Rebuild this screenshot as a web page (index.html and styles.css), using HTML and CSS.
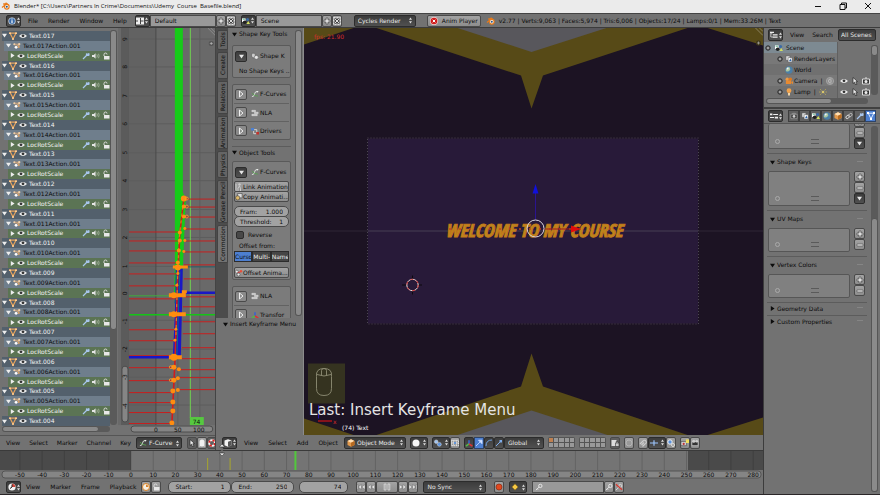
FILE: index.html
```html
<!DOCTYPE html>
<html lang="en">
<head>
    <meta charset="UTF-8">
    <meta name="viewport" content="width=device-width, initial-scale=1.0">
    <title>Blender</title>
    <link rel="stylesheet" href="styles.css">
</head>
<body>
    <!-- icon sprite -->
    <svg class="sprite" aria-hidden="true">
        <symbol id="i-blender" viewBox="0 0 12 10"><path d="M1 7 6.5 2.5H2.5M5.5 1 10 4.5" fill="none" stroke="#e77b1c" stroke-width="1.6"/><circle cx="7" cy="6" r="3.6" fill="#e77b1c"/><circle cx="7" cy="6" r="2.2" fill="#fff"/><circle cx="7" cy="6" r="1.3" fill="#265787"/></symbol>
        <symbol id="i-updown" viewBox="0 0 4 8"><path d="M0 3 2 0 4 3zM0 5 2 8 4 5z" fill="#ddd"/></symbol>
        <symbol id="i-down" viewBox="0 0 6 6"><path d="M0 1h6L3 5.5z" fill="currentColor"/></symbol>
        <symbol id="i-right" viewBox="0 0 6 6"><path d="M1 0v6l4.500-3z" fill="currentColor"/></symbol>
        <symbol id="i-play" viewBox="0 0 8 8"><path d="M2.500 1v6L6 4z" fill="none" stroke="#eee" stroke-width="1"/></symbol>
        <symbol id="i-mesh" viewBox="0 0 8 8"><path d="M1 1.200h6L4 7z" fill="none" stroke="#e8a45c" stroke-width="1.200"/><path d="M0 .5h2V2H0zM6 .5h2V2H6zM3.200 6h1.600v2H3.200z" fill="#ffcb8f"/></symbol>
        <symbol id="i-eye" viewBox="0 0 8 8"><path d="M0 4q4-4 8 0-4 4-8 0z" fill="#eee"/><circle cx="4" cy="3.800" r="1.400" fill="#333"/></symbol>
        <symbol id="i-action" viewBox="0 0 9 8"><path d="M1 2h6M2 5l2-2 3 1" stroke="#d9a774" fill="none"/><circle cx="1.500" cy="2" r="1.200" fill="#f0cfa8"/><circle cx="7" cy="2" r="1.300" fill="#f0cfa8"/><circle cx="3.500" cy="5.500" r="1.600" fill="#fff"/><circle cx="6.500" cy="5" r="1.100" fill="#e6a45f"/></symbol>
        <symbol id="i-wrench" viewBox="0 0 8 8"><path d="M1 7 5 3M4.500 1.500l1.200 1 1.200 0-.2-1.500M4.500 1.500l0 2 2 0 1-1" fill="none" stroke="#a9c6ee" stroke-width="1.200"/></symbol>
        <symbol id="i-speaker" viewBox="0 0 9 8"><path d="M0 3h2l2-2v6L2 5H0z" fill="#e6e6e6"/><path d="M5.500 2.200q1 1.800 0 3.600M7.300 1.500q1.400 2.500 0 5" stroke="#b8c4b0" fill="none" stroke-width=".8"/></symbol>
        <symbol id="i-lock" viewBox="0 0 8 8"><path d="M2 4V2.500q0-1.500 1.500-1.500T5 2.500" fill="none" stroke="#ddd"/><path d="M2 4h5.500v3.500H2z" fill="#e8e8e8"/></symbol>
        <symbol id="i-info" viewBox="0 0 8 8"><circle cx="4" cy="4" r="3.600" fill="#dfe9f5"/><circle cx="4" cy="4" r="2.900" fill="#386aa8"/><path d="M4 1.500v1M4 3.300v3" stroke="#fff" stroke-width="1.200"/></symbol>
        <symbol id="i-layout" viewBox="0 0 8 8"><path d="M0 .5h8v7H0z" fill="#eee"/><path d="M4.500 1v6M0 4h2M4.500 4h3" stroke="#444"/></symbol>
        <symbol id="i-scene" viewBox="0 0 9 8"><path d="M0 1h4v4H0z" fill="#fff"/><circle cx="6.300" cy="2.200" r="1.700" fill="#3b6aa5"/><circle cx="3" cy="5.500" r="2" fill="#202020"/><path d="M5 7.500 7 4l2 3.500z" fill="#d3e05e"/><path d="M.8 2h2.500" stroke="#4a7"/></symbol>
        <symbol id="i-plus" viewBox="0 0 8 8"><path d="M3 1h2v2h2v2H5v2H3V5H1V3h2z" fill="#ddd" stroke="#444" stroke-width=".6"/></symbol>
        <symbol id="i-minus" viewBox="0 0 8 8"><path d="M1 3h6v2H1z" fill="#ddd" stroke="#555" stroke-width=".6"/></symbol>
        <symbol id="i-x" viewBox="0 0 8 8"><path d="M.5.5h7v7h-7z" fill="none" stroke="#ddd" stroke-dasharray="2 1"/><path d="M2 2l4 4M6 2 2 6" stroke="#333" stroke-width="2"/><path d="M2 2l4 4M6 2 2 6" stroke="#ddd" stroke-width="1"/></symbol>
        <symbol id="i-stop" viewBox="0 0 8 8"><circle cx="4" cy="4" r="3.900" fill="#f3d6d6"/><circle cx="4" cy="4" r="3.300" fill="#cf1d1d"/><path d="M2.700 2.700l2.600 2.600M5.300 2.700 2.700 5.300" stroke="#fff"/></symbol>
        <symbol id="i-outliner" viewBox="0 0 10 8"><path d="M1 0v6.500h3M1 2.500h2" fill="none" stroke="#ddd"/><path d="M0 0h5v1.500H0zM3.500 3h6v1.500h-6zM3.500 6h6v1.500h-6z" fill="#eee"/></symbol>
        <symbol id="i-props" viewBox="0 0 10 8"><path d="M0 1h3v2.200H0zM4 1.600h6v1H4zM0 5.400h5v1H0zM6 4.800h4V7H6z" fill="#eee"/></symbol>
        <symbol id="i-camtool" viewBox="0 0 9 8"><path d="M1 2h7v5H1zM3 1h3v1H3z" fill="#3a3a3a" stroke="#bbb" stroke-width=".6"/><circle cx="4.500" cy="4.500" r="1.600" fill="#ccc"/></symbol>
        <symbol id="i-layersimg" viewBox="0 0 9 8"><path d="M1 .5h4.500v5H1z" fill="#ddd" stroke="#444" stroke-width=".5"/><path d="M3.500 2.500H8v5H3.500z" fill="#fff" stroke="#444" stroke-width=".5"/><path d="M6 3.500 7.500 6.500h-3z" fill="#2d63a8"/></symbol>
        <symbol id="i-world" viewBox="0 0 8 8"><circle cx="4" cy="4" r="3.700" fill="#4b7fa8"/><path d="M2 2q2-2 3 0T4 5 1 5 2 2z" fill="#a9c7a0"/><circle cx="2.600" cy="2.400" r="1" fill="#eef"/></symbol>
        <symbol id="i-cube" viewBox="0 0 8 8"><path d="M4 .3 7.500 2v4L4 7.800.5 6V2z" fill="#e49a4c"/><path d="M.5 2 4 3.700 7.500 2 4 .3z" fill="#ffe0b5"/><path d="M4 3.700v4L7.500 6V2z" fill="#b66a20"/></symbol>
        <symbol id="i-link" viewBox="0 0 9 8"><ellipse cx="3" cy="5" rx="2.300" ry="1.600" transform="rotate(-40 3 5)" fill="none" stroke="#ddd"/><ellipse cx="6" cy="3" rx="2.300" ry="1.600" transform="rotate(-40 6 3)" fill="none" stroke="#bbb"/></symbol>
        <symbol id="i-data" viewBox="0 0 8 8"><path d="M1.200 1.200h5.600L4 6.800z" fill="none" stroke="#dce9ff"/><path d="M0 0h2v2H0zM6 0h2v2H6zM3 6h2v2H3z" fill="#fff"/></symbol>
        <symbol id="i-camobj" viewBox="0 0 9 8"><circle cx="2.500" cy="2" r="1.900" fill="#ee9a45"/><circle cx="6" cy="2" r="1.900" fill="#dd7a20"/><path d="M1 3.500h6v4H1zM7 5.500 9 4v4z" fill="#e88a30"/></symbol>
        <symbol id="i-camdata" viewBox="0 0 8 8"><circle cx="4" cy="4" r="3.600" fill="#8c8c8c" stroke="#a8a8a8" stroke-width=".8"/><path d="M5.500 2q-3-.5-3 2t3 2M4 4h2" fill="none" stroke="#ccc" stroke-width=".8"/></symbol>
        <symbol id="i-lamp" viewBox="0 0 6 9"><circle cx="3" cy="3" r="2.700" fill="#f1a24b"/><path d="M2 5.500h2v3H2z" fill="#ffe1b0"/></symbol>
        <symbol id="i-sun" viewBox="0 0 8 8"><path d="M1 1l1.500 1.500M7 1 5.500 2.500M1 7l1.500-1.500M7 7 5.500 5.500M0 4h1.500M6.500 4H8" stroke="#a89c5c"/><circle cx="4" cy="4" r="1.300" fill="#d9c66a"/></symbol>
        <symbol id="i-cursor" viewBox="0 0 8 8"><path d="M2 .5v6l1.500-1.300L4.700 8 6 7.300 4.800 4.800 6.500 4.500z" fill="#eee" stroke="#222" stroke-width=".7"/></symbol>
        <symbol id="i-still" viewBox="0 0 8 8"><path d="M.5 2h7v5h-7z" fill="#333" stroke="#ddd"/><circle cx="4" cy="4.500" r="1.500" fill="#eee"/><path d="M3 .5h2v1H3z" fill="#ddd"/></symbol>
        <symbol id="i-shape" viewBox="0 0 9 8"><path d="M1 1h3l1 2-1 3H2L.5 4z" fill="#ccc" stroke="#444" stroke-width=".5"/><circle cx="6" cy="5.500" r="2.200" fill="#e8e8e8" stroke="#555" stroke-width=".5"/></symbol>
        <symbol id="i-curves" viewBox="0 0 9 8"><path d="M1 7Q4 7 4 4T8 1" stroke="#dfe8df" fill="none"/><path d="M1 3q2 3 7 3.500" stroke="#58a050" fill="none"/><path d="M6 .5l2.500.3L7 2.500" fill="#eee"/></symbol>
        <symbol id="i-nla" viewBox="0 0 9 8"><path d="M1 1h4v1.500H1zM4 3.200h4v1.500H4zM1 5.500h6V7H1z" fill="#bbb" stroke="#ececec" stroke-width=".6"/></symbol>
        <symbol id="i-drivers" viewBox="0 0 9 8"><path d="M0 .5h3.500v3H0z" fill="#4b7fd0"/><path d="M3.500 2.500h3v3M3 4v3h3" fill="none" stroke="#ddd"/><path d="M6 5h3v3H6z" fill="#c4322a"/></symbol>
        <symbol id="i-axes" viewBox="0 0 9 8"><path d="M4.500 5V1" stroke="#3a62d0" stroke-width="1.800"/><path d="M4.500 5 1 7.500" stroke="#52b848" stroke-width="1.800"/><path d="M4.500 5 8.300 7.500" stroke="#e03030" stroke-width="1.800"/></symbol>
        <symbol id="i-keys" viewBox="0 0 9 8"><circle cx="2" cy="2.500" r="1.600" fill="#eee" stroke="#333" stroke-width=".5"/><circle cx="4" cy="5.800" r="1.600" fill="#eee" stroke="#333" stroke-width=".5"/><circle cx="6.800" cy="2" r="1.400" fill="#e8503a"/><path d="M3 3.500 6 3" stroke="#c33"/></symbol>
        <symbol id="i-person" viewBox="0 0 8 8"><circle cx="4.500" cy="1.500" r="1.200" fill="#ccc"/><path d="M4.500 3 3 5v3M4.500 3l1 2.500V8M1 1v7" stroke="#ccc" fill="none"/></symbol>
        <symbol id="i-copy" viewBox="0 0 9 8"><path d="M3 0h5v5H3z" fill="#ddd" stroke="#333" stroke-width=".6"/><circle cx="3" cy="5" r="2.400" fill="#ddb96a" stroke="#333" stroke-width=".6"/></symbol>
        <symbol id="i-ghost" viewBox="0 0 8 8"><path d="M1.500 8V3q0-2.500 2.500-2.500T6.500 3v5L5 7 4 8 3 7z" fill="#f0f0f0"/></symbol>
        <symbol id="i-ring" viewBox="0 0 8 8"><circle cx="4" cy="4" r="2.900" fill="none" stroke="#f4f4f4" stroke-width="1.800"/><circle cx="4" cy="4" r="2.900" fill="none" stroke="#d22" stroke-width="1.800" stroke-dasharray="2.300 2.300"/></symbol>
        <symbol id="i-box3d" viewBox="0 0 8 8"><path d="M4 .3 7.500 1.500v4.800L4 7.800.5 6.300V1.500z" fill="#f2f2f2"/><path d="M4 2.700v5L7.500 6.300V1.500z" fill="#555"/></symbol>
        <symbol id="i-ball" viewBox="0 0 8 8"><circle cx="4" cy="4" r="3.500" fill="#f5f5f5"/></symbol>
        <symbol id="i-pivot" viewBox="0 0 9 8"><circle cx="2.500" cy="2.500" r="2" fill="#9dc1f0" stroke="#eee" stroke-width=".5"/><circle cx="6" cy="5.500" r="2.200" fill="#5a92de" stroke="#eee" stroke-width=".5"/></symbol>
        <symbol id="i-centers" viewBox="0 0 9 8"><path d="M.5 1h8v6h-8zM3 1v6M6 1v6M.5 4h8" fill="none" stroke="#eee" stroke-dasharray="1.500 .7"/><path d="M3.500 3h2v2h-2z" fill="#5a92de"/></symbol>
        <symbol id="i-arrow" viewBox="0 0 8 8"><path d="M1 7 5 3M3.500 1.200h3.500v3.500z" fill="#cfe0ff" stroke="#cfe0ff" stroke-width=".8"/></symbol>
        <symbol id="i-arc" viewBox="0 0 8 8"><path d="M1 7q0-6 6-6" fill="none" stroke="#6fa0e0"/></symbol>
        <symbol id="i-scale" viewBox="0 0 8 8"><path d="M1 7 5 3" stroke="#7eacea"/><path d="M4.500 1h2.500v2.500H4.500z" fill="#7eacea"/></symbol>
        <symbol id="i-doc" viewBox="0 0 8 8"><path d="M.5 1h5v6h-5z" fill="#ddd"/><path d="M4.500 4H8v3.500H4.500zM5.200 4V2.500h2V4" fill="#ccc" stroke="#333" stroke-width=".6"/></symbol>
        <symbol id="i-circle" viewBox="0 0 8 8"><circle cx="4" cy="4" r="3" fill="#999" stroke="#bbb" stroke-width=".8"/></symbol>
        <symbol id="i-magnet" viewBox="0 0 8 8"><path d="M1 5 4 2q2-1.500 3 .3T6 5L3.500 7.500M2.500 6 5 3.500" fill="none" stroke="#ccc" stroke-width="1.100"/></symbol>
        <symbol id="i-snap" viewBox="0 0 9 8"><path d="M0 4h9M4.500 1v6" stroke="#9dc6ff" stroke-width="1.300"/></symbol>
        <symbol id="i-snapto" viewBox="0 0 8 8"><circle cx="3" cy="3" r="2.200" fill="#5a92de" stroke="#eee"/><circle cx="6" cy="6" r="1.500" fill="none" stroke="#ddd"/></symbol>
        <symbol id="i-render" viewBox="0 0 9 8"><path d="M0 2.500h6v4.500H0z" fill="#ddd" stroke="#333" stroke-width=".6"/><path d="M5.500 0H9v4H5.500z" fill="#f1df5b"/><circle cx="3" cy="5" r="1.300" fill="#b33"/></symbol>
        <symbol id="i-film" viewBox="0 0 9 8"><path d="M1 2.500h7V7H1z" fill="#333" stroke="#ccc" stroke-width=".8"/><circle cx="3" cy="2" r="1.700" fill="#ccc"/><circle cx="6.500" cy="2" r="1.500" fill="#ccc"/></symbol>
        <symbol id="i-clock" viewBox="0 0 8 8"><circle cx="4" cy="4" r="3.600" fill="#f3f3f3"/><path d="M4 4V.8A3.200 3.200 0 0 1 7.200 4z" fill="#d3453a"/><path d="M4 1.500V4L2 5.500" stroke="#222" fill="none"/></symbol>
        <symbol id="i-preview" viewBox="0 0 8 8"><circle cx="4" cy="4" r="3.500" fill="#f6f0e4" stroke="#d8832a"/><path d="M4 4V1.500A3 3 0 0 1 6.500 4z" fill="#d8832a"/></symbol>
        <symbol id="i-rec" viewBox="0 0 8 8"><circle cx="4" cy="4" r="3" fill="#e2481f" stroke="#8d2a10" stroke-width=".7"/></symbol>
        <symbol id="i-diamond" viewBox="0 0 8 8"><path d="M4 .8 7.200 4 4 7.200.8 4z" fill="#f6c945" stroke="#6b5310" stroke-width=".6"/></symbol>
        <symbol id="i-key" viewBox="0 0 9 8"><circle cx="6" cy="2.800" r="1.900" fill="none" stroke="#eee"/><path d="M4.700 4 1 7.500M2.500 6l1 1" stroke="#eee"/></symbol>
        <symbol id="i-keyx" viewBox="0 0 9 8"><circle cx="6" cy="2.800" r="1.700" fill="none" stroke="#ddd"/><path d="M4.700 4 1 7.500" stroke="#ddd"/><path d="M1 1l7 6" stroke="#d63a30" stroke-width="1.500"/></symbol>
        <symbol id="i-rewind" viewBox="0 0 10 8"><path d="M5 1v6L1 4zM9.500 1v6l-4-3z" fill="#e6e6e6" stroke="#444" stroke-width=".4"/></symbol>
        <symbol id="i-first" viewBox="0 0 10 8"><path d="M0 1h1.200v6H0zM5.500 1v6l-4-3zM10 1v6L6 4z" fill="#e6e6e6" stroke="#444" stroke-width=".4"/></symbol>
        <symbol id="i-pause" viewBox="0 0 8 8"><path d="M1.200 1h1.800v6H1.200zM5 1h1.800v6H5z" fill="none" stroke="#ddd" stroke-width=".8"/></symbol>
        <symbol id="i-tree" viewBox="0 0 8 8"><circle cx="4" cy="4" r="2.200" fill="#777" stroke="#2a2a2a" stroke-width="1"/><path d="M3 4h2" stroke="#ddd" stroke-width=".8"/></symbol>
    </svg>

    <header class="titlebar">
        <svg class="ic wide"><use href="#i-blender"/></svg>
        <h1>Blender* [C:\Users\Partners In Crime\Documents\Udemy&nbsp; Course&nbsp; Basefile.blend]</h1>
        <div class="window-buttons">
            <button aria-label="Minimize"><svg viewBox="0 0 8 8"><path d="M1 4.500h6" stroke="#111"/></svg></button>
            <button aria-label="Restore"><svg viewBox="0 0 8 8"><path d="M1 2.500h5v5H1zM2.500 2.500V1H7.500v5H6" fill="none" stroke="#111"/></svg></button>
            <button aria-label="Close"><svg viewBox="0 0 8 8"><path d="M1 1l6 6M7 1 1 7" stroke="#111"/></svg></button>
        </div>
    </header>

    <div class="bar infobar">
        <button class="dark editor" aria-label="Editor type"><svg class="ic"><use href="#i-info"/></svg><svg class="ud"><use href="#i-updown"/></svg></button>
        <nav class="menu info-menu"><a href="#">File</a><a href="#">Render</a><a href="#">Window</a><a href="#">Help</a></nav>
        <div class="group datablock">
            <button class="dark editor" aria-label="Browse screens"><svg class="ic"><use href="#i-layout"/></svg><svg class="ud"><use href="#i-updown"/></svg></button>
            <input type="text" value="Default" aria-label="Screen name">
            <button class="light" aria-label="Add screen"><svg class="ic"><use href="#i-plus"/></svg></button>
            <button class="light" aria-label="Delete screen"><svg class="ic"><use href="#i-x"/></svg></button>
        </div>
        <div class="group datablock">
            <button class="dark editor" aria-label="Browse scenes"><svg class="ic"><use href="#i-scene"/></svg><svg class="ud"><use href="#i-updown"/></svg></button>
            <input type="text" value="Scene" aria-label="Scene name">
            <button class="light" aria-label="Add scene"><svg class="ic"><use href="#i-plus"/></svg></button>
            <button class="light" aria-label="Delete scene"><svg class="ic"><use href="#i-x"/></svg></button>
        </div>
        <div class="dark pick engine"><select aria-label="Render engine"><option>Cycles Render</option></select><svg class="ud"><use href="#i-updown"/></svg></div>
        <button class="light anim"><svg class="ic"><use href="#i-stop"/></svg>Anim Player</button>
        <div class="stats"><svg class="ic wide"><use href="#i-blender"/></svg><span>v2.77 | Verts:9,063 | Faces:5,974 | Tris:6,006 | Objects:17/24 | Lamps:0/1 | Mem:33.26M | Text</span></div>
    </div>

    <main class="workspace">
        <div class="left">
            <div class="editors">
                <!-- graph editor -->
                <section class="graph-editor">
                    <div class="graph-body">
                        <div class="channels-wrap">
                            <div class="channels" id="channels"></div>
                            <div class="hscroll"><i></i></div>
                        </div>
                        <div class="vscroll channel-scroll"><i></i></div>
                        <svg class="graph" viewBox="118 28 98 408" preserveAspectRatio="xMinYMin slice">
                            <rect x="118" y="28" width="98" height="408" fill="#696969"/>
                            <rect x="129" y="28" width="27" height="398" fill="#626262"/>
                            <rect x="121" y="28" width="8" height="398" fill="#5b5b5b"/>
                            <path d="M129 39h87M129 67h87M129 96h87M129 124h87M129 153h87M129 181h87M129 210h87M129 238h87M129 267h87M129 321h87M129 350h87M129 378h87M129 406h87M178 28v398M200 28v398" stroke="#5d5d5d" fill="none"/>
                            <path d="M156 28v398" stroke="#4a4a4a"/>
                            <!-- scale curves -->
                            <path d="M175 28h8v165l3 6-3 70-3 30h-6l1-35z" fill="#16cb18"/>
                            <path d="M176 269h7l-1 46-1 42h-8l2-42z" fill="#1917c6"/>
                            <path d="M177 272l-2 32M180 272l-3 85" stroke="#12707a" fill="none"/>
                            <path d="M190.500 28v391" stroke="#6fd34f"/>
                            <!-- flat handles before the first key and after the last one -->
                            <path d="M129 232.500h49M129 241.500h49M129 251.500h49M129 263.500h48M129 274.500h48M129 286.500h47M129 299.500h47M129 330.500h46M129 341.500h45M129 356.500h42M129 368.500h44M129 381.500h44M129 393.500h43M129 403.500h43M129 413.500h42M129 424.500h42" stroke="#c81e1e" fill="none"/>
                            <path d="M186 199.500h30M186 207.500h30M186 217.500h30M185 229.500h31M185 241.500h31M184 252.500h32M184 265.500h32M184 279.500h32M184 297.500h32M183 307.500h33M183 322.500h33M183 334.500h33M182 348.500h34M182 359.500h34M180 370.500h36M180 378.500h36M179 390.500h37" stroke="#c81e1e" fill="none"/>
                            <path d="M129 358h43M184 293.500h32" stroke="#1917c6" stroke-width="2.500"/>
                            <path d="M180 267.500h36" stroke="#29606b"/>
                            <path d="M129 296.500h46" stroke="#3fae3c"/>
                            <path d="M129 315.500h87" stroke="#14c516" stroke-width="1.400"/>
                            <path d="M184 199l-4 35-2 40-2 60-1 30-3 61" fill="none" stroke="#d11c1c" stroke-width="1.600"/>
                            <path d="M183 207l-4 34-2 60-1 40" fill="none" stroke="#e08a1c" stroke-dasharray="3 4"/>
                            <g fill="#ff8d0f">
                                <path d="M173 266h15v3h-15zM169 294h17v4h-17zM182 291h5v3h-5zM169 313h17v4h-17zM169 356h13v4h-13z"/>
                                <circle cx="184" cy="199" r="3"/><circle cx="184" cy="207" r="2"/><circle cx="184" cy="217" r="2"/><circle cx="185" cy="229" r="1.500"/>
                                <circle cx="180" cy="233" r="2"/><circle cx="180" cy="241" r="2"/><circle cx="185" cy="241" r="1.500"/><circle cx="179" cy="251" r="2"/><circle cx="184" cy="252" r="1.500"/><circle cx="178" cy="263" r="2"/>
                                <circle cx="178" cy="274" r="1.500"/><circle cx="177" cy="286" r="1.500"/><circle cx="176" cy="330" r="1.500"/><circle cx="175" cy="341" r="1.500"/>
                                <circle cx="174" cy="358" r="3.500"/><circle cx="174" cy="296" r="3"/><circle cx="174" cy="315" r="3"/><circle cx="178" cy="268" r="3"/>
                                <circle cx="174" cy="368" r="2.500"/><circle cx="179" cy="370" r="2"/><circle cx="174" cy="381" r="2.500"/><circle cx="178" cy="379" r="2"/><circle cx="173" cy="392" r="2.500"/><circle cx="178" cy="391" r="2"/>
                                <circle cx="173" cy="403" r="2.500"/><circle cx="173" cy="412" r="2.500"/><circle cx="172" cy="424" r="2.500"/>
                            </g>
                            <g fill="none" stroke="#ff9a2a" stroke-width=".8"><circle cx="187" cy="199" r="1.500"/><circle cx="187" cy="207" r="1.500"/><circle cx="187" cy="217" r="1.500"/><circle cx="171" cy="368" r="1.500"/><circle cx="171" cy="381" r="1.500"/></g>
                            <rect x="190" y="418" width="14" height="8" fill="#56c840"/>
                            <text class="ruler-text" x="193" y="425">74</text>
                            <!-- rulers -->
                            <rect x="122" y="367" width="6" height="56" rx="3" fill="#858585" stroke="#4c4c4c"/>
                            <rect x="118" y="426" width="98" height="10" fill="#727272"/>
                            <rect x="131" y="427" width="82" height="6" rx="3" fill="#858585" stroke="#4c4c4c"/>
                            <g class="ruler-text" id="graph-ruler">
                                <text x="156" y="433" text-anchor="middle">0</text><text x="178" y="433" text-anchor="middle">50</text><text x="199" y="433" text-anchor="middle">100</text>
                            </g>
                            <rect x="209" y="41" width="5" height="5" rx="2" fill="#555"/><path d="M210 43.500h3M211.500 42v3" stroke="#bbb" stroke-width=".7"/>
                            <path d="M208 28l8 8M211 28l5 5" stroke="#999" stroke-width=".7"/>
                        </svg>
                    </div>
                    <div class="bar graph-bar">
                        <nav class="menu"><a href="#">View</a><a href="#">Select</a><a href="#">Marker</a><a href="#">Channel</a><a href="#">Key</a></nav>
                        <div class="dark pick mode"><svg class="ic"><use href="#i-curves"/></svg><select aria-label="Editing mode"><option>F-Curve</option></select><svg class="ud"><use href="#i-updown"/></svg></div>
                        <div class="group">
                            <button class="light on" aria-label="Only selected"><svg class="ic"><use href="#i-cursor"/></svg></button>
                            <button class="light" aria-label="Show hidden"><svg class="ic"><use href="#i-ghost"/></svg></button>
                            <button class="light on" aria-label="Only errors"><svg class="ic"><use href="#i-ring"/></svg></button>
                        </div>
                    </div>
                </section>

                <!-- 3d view -->
                <section class="view3d">
                    <div class="view-body">
                        <aside class="shelf">
                            <div class="shelf-top">
                                <div class="tabs">
                                    <button class="h20">Tools</button><button class="h27">Create</button><button class="h33">Relations</button><button class="h33">Animation</button><button class="h27">Physics</button><button class="h43">Grease Pencil</button><button class="h38 active">Commotion</button>
                                </div>
                                <div class="panels">
                                    <h2><svg class="tri"><use href="#i-down"/></svg>Shape Key Tools</h2>
                                    <div class="box">
                                        <div class="tool"><button class="dark sq" aria-label="Close shape keys"><svg class="tri"><use href="#i-down"/></svg></button><svg class="ic"><use href="#i-shape"/></svg>Shape K</div>
                                        <p>No Shape Keys ...</p>
                                    </div>
                                    <div class="box split">
                                        <div class="tool"><button class="light sq" aria-label="Open F-Curves"><svg class="ic"><use href="#i-play"/></svg></button><svg class="ic"><use href="#i-curves"/></svg>F-Curves</div>
                                        <div class="tool"><button class="light sq" aria-label="Open NLA"><svg class="ic"><use href="#i-play"/></svg></button><svg class="ic"><use href="#i-nla"/></svg>NLA</div>
                                        <div class="tool"><button class="light sq" aria-label="Open drivers"><svg class="ic"><use href="#i-play"/></svg></button><svg class="ic"><use href="#i-drivers"/></svg>Drivers</div>
                                    </div>
                                    <h2 class="ruled"><svg class="tri"><use href="#i-down"/></svg>Object Tools</h2>
                                    <div class="box">
                                        <div class="tool"><button class="dark sq" aria-label="Close F-Curves"><svg class="tri"><use href="#i-down"/></svg></button><svg class="ic"><use href="#i-curves"/></svg>F-Curves</div>
                                        <div class="stack">
                                            <button class="light"><svg class="ic"><use href="#i-person"/></svg>Link Animation</button>
                                            <button class="light"><svg class="ic"><use href="#i-copy"/></svg>Copy Animati...</button>
                                        </div>
                                        <div class="stack round">
                                            <label class="num"><span>Fram:</span><input type="text" value="1.000"></label>
                                            <label class="num"><span>Threshold:</span><input type="text" value="1"></label>
                                        </div>
                                        <label class="check"><input type="checkbox">Reverse</label>
                                        <p class="offset">Offset from:</p>
                                        <div class="seg"><button class="sel">Curso</button><button>Multi-</button><button>Name</button></div>
                                        <button class="light full"><svg class="ic"><use href="#i-keys"/></svg>Offset Anima...</button>
                                    </div>
                                    <div class="box split">
                                        <div class="tool"><button class="light sq" aria-label="Open NLA offset"><svg class="ic"><use href="#i-play"/></svg></button><svg class="ic"><use href="#i-nla"/></svg>NLA</div>
                                        <div class="tool"><button class="light sq" aria-label="Open transforms"><svg class="ic"><use href="#i-play"/></svg></button><svg class="ic"><use href="#i-axes"/></svg>Transfor</div>
                                    </div>
                                </div>
                                <div class="vscroll shelf-scroll"><i></i></div>
                            </div>
                            <div class="operator"><h2><svg class="tri"><use href="#i-down"/></svg>Insert Keyframe Menu</h2></div>
                        </aside>
                        <svg class="viewport" viewBox="304 28 459 408" preserveAspectRatio="xMidYMid slice">
                            <rect x="304" y="28" width="459" height="408" fill="#1c1323"/>
                            <g fill="#574a17">
                                <path d="M304 28h51l-51 17zM375 28l146 48 10.500 33L543 76l146-48zM706 28h57v18z"/>
                                <path d="M304 419l51 17h-51zM375 436l146-49 10.500-33L543 387l146 49zM763 418v18h-57z"/>
                            </g>
                            <path d="M456 28l75.500 24.500L608 28zM456 436l75.500-25 77.500 25z" fill="#58575c"/>
                            <rect x="368" y="139" width="330" height="185" fill="#281a39"/>
                            <rect x="367.500" y="138.500" width="331" height="186" fill="none" stroke="#4c4652" stroke-dasharray="1 2"/>
                            <path d="M304 231.500h459" stroke="#2f2737"/>
                            <path d="M368 231.500h330" stroke="#453956"/>
                            <text class="welcome" x="534" y="237" text-anchor="middle">WELCOME TO MY COURSE</text>
                            <path d="M449 229.500h172" stroke="#c4421a" stroke-dasharray="2 8" stroke-width="1.600"/>
                            <path d="M535.500 220v-27" stroke="#2a1490"/><path d="M532.500 194h6l-3-9.500z" fill="#1010dc"/>
                            <path d="M544 229.500h28" stroke="#9c1a1c"/><path d="M571 226v7l10-3.500z" fill="#e00b0b"/>
                            <circle cx="535.500" cy="229" r="8.500" fill="none" stroke="#dcd6dc"/>
                            <g fill="none"><path d="M402 285.500h4M418 285.500h4M412.500 276v4M412.500 291v4" stroke="#0c080f"/><circle cx="412.500" cy="285.500" r="5.700" stroke="#e4dada"/><circle cx="412.500" cy="285.500" r="5.700" stroke="#cc2a2a" stroke-dasharray="3 3"/></g>
                            <!-- screencast keys -->
                            <rect x="308" y="364" width="37" height="40" fill="#353320"/>
                            <path d="M316.500 377q-1-8 7.500-8t7.500 8v12q0 7-7.500 7t-7.500-7zM317 375q7 3 14 0M321.500 376v-5q0-2 2.500-2t2.500 2v5" fill="none" stroke="#8e8d75" stroke-width=".9"/>
                            <path d="M318.500 419v-13" stroke="#2214b0"/><path d="M318 421.500h14" stroke="#c01318" stroke-width="1.300"/>
                            <text class="axis" x="333" y="424">x</text>
                            <text class="cast" x="309" y="415">Last: Insert Keyframe Menu</text>
                            <text class="overlay" x="342" y="430">(74) Text</text>
                            <text class="fps" x="314" y="39">fps: 21.90</text>
                            <path d="M755 28l8 8M759 28l4 4" stroke="#a09a80" stroke-width=".7"/>
                            <rect x="756" y="41" width="5" height="5" rx="2" fill="#3e3618"/><path d="M757 43.500h3M758.500 42v3" stroke="#aaa" stroke-width=".7"/>
                        </svg>
                    </div>
                    <div class="bar view-bar">
                        <button class="dark editor" aria-label="Editor type"><svg class="ic"><use href="#i-box3d"/></svg><svg class="ud"><use href="#i-updown"/></svg></button>
                        <nav class="menu"><a href="#">View</a><a href="#">Select</a><a href="#">Add</a><a href="#">Object</a></nav>
                        <div class="dark pick objmode"><svg class="ic"><use href="#i-cube"/></svg><select aria-label="Mode"><option>Object Mode</option></select><svg class="ud"><use href="#i-updown"/></svg></div>
                        <button class="dark shade" aria-label="Viewport shading"><svg class="ic"><use href="#i-ball"/></svg><svg class="ud"><use href="#i-updown"/></svg></button>
                        <div class="group">
                            <button class="dark shade" aria-label="Pivot point"><svg class="ic"><use href="#i-pivot"/></svg><svg class="ud"><use href="#i-updown"/></svg></button>
                            <button class="light" aria-label="Manipulate centers"><svg class="ic"><use href="#i-centers"/></svg></button>
                        </div>
                        <div class="group">
                            <button class="dark" aria-label="Manipulator"><svg class="ic"><use href="#i-axes"/></svg></button>
                            <button class="blue" aria-label="Translate"><svg class="ic"><use href="#i-arrow"/></svg></button>
                            <button class="dark" aria-label="Rotate"><svg class="ic"><use href="#i-arc"/></svg></button>
                            <button class="dark" aria-label="Scale"><svg class="ic"><use href="#i-scale"/></svg></button>
                            <div class="dark pick orient"><select aria-label="Orientation"><option>Global</option></select><svg class="ud"><use href="#i-updown"/></svg></div>
                        </div>
                        <div class="layers first"><i></i><i></i><i></i><i></i><i></i><i></i><i></i><i></i><i></i><i></i></div>
                        <div class="layers"><i></i><i></i><i></i><i></i><i></i><i></i><i></i><i></i><i></i><i></i></div>
                        <button class="light on" aria-label="Lock layers"><svg class="ic"><use href="#i-doc"/></svg></button>
                        <button class="light" aria-label="Proportional edit"><svg class="ic"><use href="#i-circle"/></svg></button>
                        <div class="group">
                            <button class="light" aria-label="Snap"><svg class="ic"><use href="#i-magnet"/></svg></button>
                            <button class="dark shade" aria-label="Snap element"><svg class="ic"><use href="#i-snap"/></svg><svg class="ud"><use href="#i-updown"/></svg></button>
                            <button class="light" aria-label="Snap target"><svg class="ic"><use href="#i-snapto"/></svg></button>
                        </div>
                        <div class="group">
                            <button class="light" aria-label="Render image"><svg class="ic"><use href="#i-render"/></svg></button>
                            <button class="light" aria-label="Render animation"><svg class="ic"><use href="#i-film"/></svg></button>
                        </div>
                    </div>
                </section>
            </div>

            <!-- timeline -->
            <section class="timeline">
                <svg class="frames" id="frames" viewBox="0 452 763 29" preserveAspectRatio="xMinYMin slice"></svg>
                <div class="bar time-bar">
                    <button class="dark editor" aria-label="Editor type"><svg class="ic"><use href="#i-clock"/></svg><svg class="ud"><use href="#i-updown"/></svg></button>
                    <nav class="menu"><a href="#">View</a><a href="#">Marker</a><a href="#">Frame</a><a href="#">Playback</a></nav>
                    <div class="group">
                        <button class="light" aria-label="Preview range"><svg class="ic"><use href="#i-preview"/></svg></button>
                        <button class="light" aria-label="Lock time cursor"><svg class="ic"><use href="#i-lock"/></svg></button>
                    </div>
                    <div class="group range">
                        <label class="num"><span>Start:</span><input type="text" value="1"></label>
                        <label class="num"><span>End:</span><input type="text" value="250"></label>
                    </div>
                    <label class="num current"><input type="text" value="74" aria-label="Current frame"></label>
                    <div class="group playback">
                        <button class="light" aria-label="First frame"><svg class="ic"><use href="#i-first"/></svg></button>
                        <button class="light" aria-label="Previous keyframe"><svg class="ic"><use href="#i-rewind"/></svg></button>
                        <button class="light pause" aria-label="Pause"><svg class="ic"><use href="#i-pause"/></svg></button>
                        <button class="light flip" aria-label="Next keyframe"><svg class="ic"><use href="#i-rewind"/></svg></button>
                        <button class="light flip" aria-label="Last frame"><svg class="ic"><use href="#i-first"/></svg></button>
                    </div>
                    <div class="dark pick sync"><select aria-label="Sync mode"><option>No Sync</option></select><svg class="ud"><use href="#i-updown"/></svg></div>
                    <button class="light rec" aria-label="Auto keyframe"><svg class="ic"><use href="#i-rec"/></svg></button>
                    <button class="dark shade" aria-label="Keyframe type"><svg class="ic"><use href="#i-diamond"/></svg><svg class="ud"><use href="#i-updown"/></svg></button>
                    <div class="group keying">
                        <label class="keyset"><svg class="ic"><use href="#i-key"/></svg><input type="text" aria-label="Keying set"></label>
                        <button class="light" aria-label="Insert keyframe"><svg class="ic"><use href="#i-key"/></svg></button>
                        <button class="light" aria-label="Delete keyframe"><svg class="ic"><use href="#i-keyx"/></svg></button>
                    </div>
                </div>
            </section>
            <svg class="resize-cursor" viewBox="0 0 6 12"><path d="M3 0l2.500 3h-5zM3 12 .5 9h5zM2.500 3h1v6h-1z" fill="#fff" stroke="#222" stroke-width=".5"/></svg>
        </div>

        <aside class="right">
            <section class="outliner">
                <div class="bar">
                    <button class="dark editor" aria-label="Editor type"><svg class="ic"><use href="#i-outliner"/></svg><svg class="ud"><use href="#i-updown"/></svg></button>
                    <nav class="menu"><a href="#">View</a><a href="#">Search</a></nav>
                    <select class="dark scenes" aria-label="Display mode"><option>All Scenes</option></select>
                </div>
                <div class="tree-wrap">
                    <ul class="tree">
                        <li class="scene"><svg class="ic"><use href="#i-tree"/></svg><svg class="ic"><use href="#i-scene"/></svg>Scene</li>
                        <li class="l2"><svg class="ic"><use href="#i-tree"/></svg><svg class="ic"><use href="#i-layersimg"/></svg>RenderLayers</li>
                        <li class="l2"><span class="ic"></span><svg class="ic"><use href="#i-world"/></svg>World</li>
                        <li class="l2"><svg class="ic"><use href="#i-tree"/></svg><svg class="ic"><use href="#i-camobj"/></svg>Camera<span class="bar-sep">|</span><svg class="ic"><use href="#i-camdata"/></svg></li>
                        <li class="l2"><svg class="ic"><use href="#i-tree"/></svg><svg class="ic"><use href="#i-lamp"/></svg>Lamp<span class="bar-sep">|</span><svg class="ic"><use href="#i-sun"/></svg></li>
                    </ul>
                    <div class="toggles">
                        <svg class="ic"><use href="#i-eye"/></svg><svg class="ic"><use href="#i-cursor"/></svg><svg class="ic"><use href="#i-still"/></svg>
                        <svg class="ic"><use href="#i-eye"/></svg><svg class="ic"><use href="#i-cursor"/></svg><svg class="ic"><use href="#i-still"/></svg>
                    </div>
                    <div class="vscroll tree-scroll"><i></i></div>
                </div>
                <div class="hscroll"><i></i></div>
            </section>
            <section class="properties">
                <div class="bar">
                    <button class="dark editor" aria-label="Editor type"><svg class="ic"><use href="#i-props"/></svg><svg class="ud"><use href="#i-updown"/></svg></button>
                    <div class="group contexts">
                        <button class="mid" aria-label="Render"><svg class="ic"><use href="#i-camtool"/></svg></button>
                        <button class="mid" aria-label="Render layers"><svg class="ic"><use href="#i-layersimg"/></svg></button>
                        <button class="mid" aria-label="Scene"><svg class="ic"><use href="#i-scene"/></svg></button>
                        <button class="mid" aria-label="World"><svg class="ic"><use href="#i-world"/></svg></button>
                        <button class="mid" aria-label="Object"><svg class="ic"><use href="#i-cube"/></svg></button>
                        <button class="mid" aria-label="Constraints"><svg class="ic"><use href="#i-link"/></svg></button>
                        <button class="mid" aria-label="Modifiers"><svg class="ic"><use href="#i-wrench"/></svg></button>
                        <button class="blue" aria-label="Data"><svg class="ic"><use href="#i-data"/></svg></button>
                    </div>
                </div>
                <div class="props-body">
                    <div class="props">
                        <div class="slot cut"><div class="list"></div><div class="side"><button class="light" aria-label="Add group"><svg class="ic"><use href="#i-plus"/></svg></button><button class="light" aria-label="Remove group"><svg class="ic"><use href="#i-minus"/></svg></button><button class="dark" aria-label="Group specials"><svg class="tri"><use href="#i-down"/></svg></button></div></div>
                        <h2><svg class="tri"><use href="#i-down"/></svg>Shape Keys</h2>
                        <div class="slot"><div class="list"></div><div class="side"><button class="light" aria-label="Add shape key"><svg class="ic"><use href="#i-plus"/></svg></button><button class="light" aria-label="Remove shape key"><svg class="ic"><use href="#i-minus"/></svg></button><button class="dark" aria-label="Shape key specials"><svg class="tri"><use href="#i-down"/></svg></button></div></div>
                        <h2><svg class="tri"><use href="#i-down"/></svg>UV Maps</h2>
                        <div class="slot short"><div class="list"></div><div class="side"><button class="light" aria-label="Add UV map"><svg class="ic"><use href="#i-plus"/></svg></button><button class="light" aria-label="Remove UV map"><svg class="ic"><use href="#i-minus"/></svg></button></div></div>
                        <h2><svg class="tri"><use href="#i-down"/></svg>Vertex Colors</h2>
                        <div class="slot short"><div class="list"></div><div class="side"><button class="light" aria-label="Add vertex color"><svg class="ic"><use href="#i-plus"/></svg></button><button class="light" aria-label="Remove vertex color"><svg class="ic"><use href="#i-minus"/></svg></button></div></div>
                        <h2 class="closed"><svg class="tri"><use href="#i-right"/></svg>Geometry Data</h2>
                        <h2 class="closed"><svg class="tri"><use href="#i-right"/></svg>Custom Properties</h2>
                    </div>
                    <div class="vscroll props-scroll"><i></i></div>
                </div>
            </section>
        </aside>
    </main>
    <script src="script.js"></script>
</body>
</html>
```

FILE: styles.css
```css
* {
    box-sizing: border-box;
}
body {
    margin: 0;
    height: 100vh;
    display: flex;
    flex-direction: column;
    overflow: hidden;
    background: #727272;
    color: #0c0c0c;
    font: 6px/8px "DejaVu Sans", sans-serif;
    border-bottom: 1px solid #2a2628;
}
button, input, select {
    font: inherit;
    color: inherit;
    margin: 0;
    padding: 0;
    border: 0;
    background: none;
    appearance: none;
    min-width: 0;
}
h1, h2, p, ul {
    margin: 0;
    padding: 0;
    font-size: 6px;
    font-weight: normal;
    list-style: none;
}
a {
    color: inherit;
    text-decoration: none;
}
svg {
    display: block;
    flex: none;
}
.sprite {
    position: absolute;
    width: 0;
    height: 0;
}
.ic {
    width: 8px;
    height: 8px;
    flex: none;
}
.ic.wide {
    width: 10px;
}
.ud {
    width: 3px;
    height: 7px;
}
.tri {
    width: 5px;
    height: 5px;
}

/* title bar */
.titlebar {
    display: flex;
    align-items: center;
    gap: 3px;
    flex: none;
    height: 13px;
    padding: 0 8px 1px 1px;
    background: #ebebeb;
    color: #111;
    font-family: "Open Sans", sans-serif;
}
.window-buttons {
    display: flex;
    gap: 17px;
    margin-left: auto;
}
.window-buttons button, .window-buttons svg {
    width: 8px;
    height: 8px;
}

/* headers */
.bar {
    display: flex;
    align-items: center;
    flex: none;
    height: 15px;
    gap: 5px;
    padding: 0 6px;
    background: #727272;
    white-space: nowrap;
    overflow: hidden;
}
.menu {
    display: flex;
    gap: 10px;
}
.group {
    display: flex;
}
.bar button {
    display: flex;
    align-items: center;
    justify-content: center;
    flex: none;
    height: 12px;
    min-width: 10px;
}
.dark {
    background: linear-gradient(#3c3c3c, #505050);
    border: 1px solid #2c2c2c;
    border-radius: 2px;
    color: #e8e8e8;
}
.light {
    background: linear-gradient(#a3a3a3, #8d8d8d);
    border: 1px solid #4a4a4a;
    border-radius: 2px;
}
.light.on {
    background: #5f5f5f;
}
.light.sq {
    background: #8a8a8a;
}
.mid {
    background: #606060;
    border: 1px solid #3e3e3e;
}
.blue {
    background: #4d7fd0;
    border: 1px solid #2e4468;
}
.bar .editor {
    gap: 1px;
    width: 15px;
}
.bar .shade {
    gap: 3px;
    width: 18px;
}
.pick {
    display: flex;
    align-items: center;
    height: 12px;
    gap: 2px;
    padding: 0 3px;
}
.pick select {
    flex: 1;
}
.infobar {
    border-top: 1px solid #444;
    border-bottom: 1px solid #3c3c3c;
    gap: 5px;
}
.info-menu {
    padding: 0 3px 0 2px;
}
.datablock input {
    width: 66px;
    height: 12px;
    padding: 0 4px;
    background: #999;
    border: 1px solid #4a4a4a;
}
.engine {
    width: 62px;
    margin: 0 6px 0 7px;
}
.infobar .anim {
    width: 54px;
    gap: 4px;
}
.stats {
    display: flex;
    gap: 3px;
}

/* workspace */
.workspace {
    flex: 1;
    display: flex;
    min-height: 0;
}
.left {
    position: relative;
    flex: 1;
    display: flex;
    flex-direction: column;
    min-width: 0;
}
.editors {
    flex: 1;
    display: flex;
    min-height: 0;
}
.graph-editor {
    flex: none;
    width: 216px;
    display: flex;
    flex-direction: column;
    border-right: 1px solid #444;
}
.graph-body {
    flex: 1;
    display: flex;
    min-height: 0;
}
.graph-bar {
    border-top: 1px solid #555;
    padding-right: 0;
}
.graph-bar .menu {
    gap: 9px;
}
.mode {
    flex: none;
    width: 46px;
}
.mode, .objmode {
    padding: 0 2px;
}
.channels-wrap {
    width: 110px;
    display: flex;
    flex-direction: column;
    padding: 3px 0 3px 2px;
}
.channels {
    flex: 1;
    display: flex;
    flex-direction: column;
    min-height: 0;
}
.channel {
    flex: 1;
    display: flex;
    align-items: center;
    gap: 2px;
    min-height: 0;
    overflow: hidden;
    white-space: nowrap;
    color: #f2f2f2;
}
.channel .tri {
    color: #eee;
}
.channel.object {
    background: #53606c;
}
.channel.action {
    background: #6f7e8c;
    margin-left: 2px;
    padding-left: 2px;
    color: #0c0c0c;
}
.channel.fgroup {
    background: #5b7454;
    margin-left: 6px;
    padding-left: 2px;
}
.channel.fgroup span {
    flex: 1;
}
.hscroll, .vscroll {
    flex: none;
    background: #5a5a5a;
    border-radius: 3px;
}
.hscroll {
    height: 6px;
}
.hscroll i, .vscroll i {
    display: block;
    background: #8a8a8a;
    border: 1px solid #555;
    border-radius: 3px;
}
.hscroll i {
    width: 90%;
    height: 100%;
}
.vscroll {
    width: 7px;
}
.vscroll i {
    height: 100%;
}
.channel-scroll {
    margin: 2px 1px 10px 0;
}
.channel-scroll i {
    height: 76%;
}
.graph {
    flex: 1;
    min-width: 0;
    height: 100%;
}
.ruler-text {
    font-size: 6px;
    fill: #0c0c0c;
}

/* tool shelf */
.view3d {
    flex: 1;
    display: flex;
    flex-direction: column;
    min-width: 0;
}
.view-body {
    flex: 1;
    display: flex;
    min-height: 0;
}
.shelf {
    flex: none;
    width: 88px;
    display: flex;
    flex-direction: column;
    border-right: 1px solid #8c8c8c;
}
.shelf-top {
    flex: none;
    height: 290px;
    display: flex;
    overflow: hidden;
}
.tabs {
    width: 12px;
    display: flex;
    flex-direction: column;
    gap: 2px;
    padding: 2px 0 0 1px;
    background: #4c4c4c;
}
.tabs button {
    flex: none;
    writing-mode: vertical-rl;
    transform: rotate(180deg);
    line-height: 9px;
    background: #656565;
    border: 1px solid #434343;
    border-radius: 0 2px 2px 0;
}
.tabs .active {
    background: #727272;
}
.h20 { height: 20px; }
.h27 { height: 27px; }
.h33 { height: 33px; }
.h38 { height: 38px; }
.h43 { height: 43px; }
.panels {
    flex: 1;
    min-width: 0;
    padding: 0 4px;
    white-space: nowrap;
}
h2 {
    display: flex;
    align-items: center;
    gap: 2px;
    height: 12px;
    line-height: 8px;
    white-space: nowrap;
}
.panels h2 {
    margin-bottom: 5px;
}
.panels h2.ruled {
    border-top: 1px solid #5c5c5c;
    margin: 3px 0;
}
.box {
    background: #7b7b7b;
    border: 1px solid #5a5a5a;
    border-radius: 2px;
    padding: 1px;
    margin-bottom: 6px;
    overflow: hidden;
}
.box p {
    padding: 2px 5px;
    line-height: 7px;
}
.tool {
    display: flex;
    align-items: center;
    gap: 1px;
    height: 18px;
    padding-left: 1px;
}
.split {
    padding: 0 1px;
}
.split .tool + .tool {
    border-top: 1px solid #626262;
}
.sq {
    display: grid;
    place-items: center;
    width: 12px;
    height: 11px;
    margin-right: 3px;
}
.stack {
    display: flex;
    flex-direction: column;
    margin-bottom: 4px;
}
.stack.round {
    margin-bottom: 3px;
}
.stack button, .full {
    display: flex;
    align-items: center;
    width: 100%;
    height: 11px;
    overflow: hidden;
    white-space: nowrap;
}
.stack button + button {
    margin-top: -1px;
}
.num {
    display: flex;
    align-items: center;
    height: 11px;
    padding: 0 6px;
    background: #a2a2a2;
    border: 1px solid #4a4a4a;
    border-radius: 5px;
}
.num input {
    flex: 1;
    width: 0;
    text-align: right;
}
.stack .num {
    padding: 0 5px;
}
.stack .num + .num {
    margin-top: -1px;
}
.check {
    display: flex;
    align-items: center;
    gap: 4px;
    height: 10px;
    padding-left: 2px;
}
.check input {
    width: 8px;
    height: 8px;
    background: #484848;
    border: 1px solid #2c2c2c;
    border-radius: 2px;
}
.seg {
    display: flex;
    height: 11px;
    margin-bottom: 5px;
}
.seg button {
    flex: 1;
    background: #454545;
    border: 1px solid #2c2c2c;
    color: #eee;
    overflow: hidden;
}
.seg .sel {
    background: #4d7fd0;
    color: #0c0c0c;
}
.shelf-scroll {
    margin: 2px 1px 2px 0;
}
.operator {
    flex: 1;
    padding-left: 7px;
}
.viewport {
    flex: 1;
    min-width: 0;
    height: 100%;
}
.welcome {
    font: italic bold 18px "Open Sans Condensed", "Roboto Condensed", Roboto, sans-serif;
    fill: #b98a1c;
    stroke: #c4781a;
    stroke-width: 1px;
}
.cast {
    font-size: 15px;
    fill: #e4e4e4;
}
.overlay {
    fill: #fff;
}
.fps, .axis {
    fill: #d22c2c;
}
.view-bar {
    gap: 4px;
}
.view-bar .menu {
    padding: 0 2px 0 3px;
}
.objmode {
    width: 62px;
}
.orient {
    width: 40px;
}
.layers {
    display: grid;
    grid-template-columns: repeat(5, 1fr);
    width: 27px;
    height: 11px;
    gap: 1px;
    padding: 1px;
    background: #555;
    border-radius: 2px;
}
.layers i {
    background: #999;
}
.layers.first i:first-child {
    background: #c08050;
}

/* timeline */
.timeline {
    flex: none;
    border-top: 1px solid #3a3a3a;
}
.frames {
    width: 100%;
    height: 29px;
}
.time-bar {
    height: 14px;
    gap: 5px;
    padding-left: 6px;
}
.time-bar .num {
    height: 12px;
}
.range {
    padding-left: 2px;
}
.range .num {
    width: 63px;
}
.time-bar .current {
    width: 49px;
}
.playback {
    padding: 0 0 0 3px;
}
.time-bar .pause {
    width: 22px;
}
.flip .ic {
    transform: scaleX(-1);
}
.sync {
    width: 63px;
    margin-right: 3px;
}
.keyset {
    display: flex;
    align-items: center;
    width: 72px;
    height: 12px;
    padding: 0 2px;
    background: #999;
    border: 1px solid #4a4a4a;
}
.keyset input {
    flex: 1;
}
.resize-cursor {
    position: absolute;
    left: 219px;
    bottom: 38px;
    width: 6px;
    height: 12px;
}

/* right column */
.right {
    flex: none;
    width: 117px;
    display: flex;
    flex-direction: column;
    border-left: 1px solid #3c3c3c;
}
.right .bar {
    height: 14px;
    padding: 0 4px;
}
.outliner .bar {
    padding-right: 0;
}
.scenes {
    flex: none;
    width: 38px;
    height: 12px;
    padding: 0 2px;
}
.outliner {
    border-bottom: 2px solid #404040;
    padding-bottom: 3px;
}
.outliner .menu {
    gap: 8px;
    padding-left: 2px;
}
.tree-wrap {
    display: flex;
    height: 56px;
}
.tree {
    flex: 1;
    min-width: 0;
    overflow: hidden;
}
.tree li {
    display: flex;
    align-items: center;
    gap: 1px;
    height: 11px;
    background: #707070;
    white-space: nowrap;
}
.tree li:nth-child(even) {
    background: #787878;
}
.tree li.scene {
    background: #7d8a92;
    gap: 3px;
}
.tree .l2 {
    padding-left: 12px;
}
.bar-sep {
    margin: 0 2px;
}
.toggles {
    display: grid;
    grid-template-columns: repeat(3, 11px);
    grid-auto-rows: 11px;
    align-content: end;
    place-items: center;
    border-left: 1px solid #606060;
    padding: 0 0 1px;
}
.tree-scroll {
    margin: 3px 2px 3px 0;
}
.tree-scroll i {
    height: 11px;
}
.outliner .hscroll {
    margin: 0 12px 0 2px;
}
.outliner .hscroll i {
    width: 65%;
}
.properties {
    flex: 1;
    display: flex;
    flex-direction: column;
    min-height: 0;
}
.contexts button {
    width: 11px;
}
.props-body {
    flex: 1;
    display: flex;
    border-top: 1px solid #555;
    min-height: 0;
}
.props {
    flex: 1;
    padding: 0 3px;
}
.props h2 {
    height: 18px;
    padding: 0 4px 1px 3px;
    border-top: 1px solid #5c5c5c;
}
.props h2::after {
    content: "";
    width: 6px;
    height: 2px;
    margin-left: auto;
    border-top: 1px solid #858585;
}
.props h2.closed {
    height: 13px;
}
.slot {
    display: flex;
    gap: 4px;
    height: 39px;
    padding: 0 2px 4px 1px;
}
.slot.short {
    height: 28px;
}
.slot.cut {
    height: 29px;
}
.list {
    position: relative;
    flex: 1;
    background: #808080;
    border: 1px solid #565656;
    border-radius: 2px;
}
.cut .list {
    border-top: 0;
}
.list::before, .list::after {
    content: "";
    position: absolute;
    bottom: 4px;
}
.list::before {
    left: 6px;
    width: 3px;
    height: 3px;
    border: 1px solid #aaa;
    border-radius: 50%;
}
.list::after {
    left: 42px;
    width: 8px;
    height: 3px;
    border: solid #5a5a5a;
    border-width: 1px 0;
}
.side {
    display: flex;
    flex-direction: column;
    justify-content: flex-start;
    width: 11px;
    overflow: hidden;
}
.cut .side {
    justify-content: flex-end;
}
.side button {
    display: grid;
    place-items: center;
    flex: none;
    height: 11px;
}
.props-scroll {
    margin: 2px 2px 2px 1px;
    padding-top: 92px;
}
```

FILE: script.js
```javascript
const icon = (name) => `<svg class="ic"><use href="#i-${name}"/></svg>`;
const tri = (name) => `<svg class="tri"><use href="#i-${name}"/></svg>`;

// channel list: one object, its action and the LocRotScale group
const names = [];
for (let n = 17; n >= 4; n--) {
    names.push('Text.' + String(n).padStart(3, '0'));
}

document.getElementById('channels').innerHTML = names.map((name, i) => {
    const object = `<div class="channel object">${tri('down')}${icon('mesh')}${icon('eye')}<span>${name}</span></div>`;
    if (i === names.length - 1) return object;
    return object + `
        <div class="channel action">${tri('down')}${icon('action')}<span>${name}Action.001</span></div>
        <div class="channel fgroup">${tri('right')}${icon('eye')}<span>LocRotScale</span>${icon('wrench')}${icon('speaker')}${icon('lock')}</div>`;
}).join('');

// value ruler of the graph editor
const ruler = document.getElementById('graph-ruler');
const values = [[9, 39], [8, 67], [7, 96], [6, 124], [5, 153], [4, 181], [3, 210], [2, 238], [1, 267], [0, 294], [-1, 322], [-2, 350], [-3, 378], [-4, 407]];
ruler.innerHTML += values.map(([v, y]) =>
    `<text transform="translate(127 ${y}) rotate(-90)" text-anchor="middle">${v}</text>`
).join('');

// timeline
const frameX = (f) => 131 + f * 2.222;
let out = `
    <rect x="0" y="452" width="763" height="19" fill="#4a4a4a"/>
    <rect x="131" y="452" width="557" height="19" fill="#747474"/>
    <rect x="0" y="471" width="763" height="10" fill="#727272"/>
    <rect x="2" y="472" width="759" height="7" rx="3" fill="#858585" stroke="#555"/>`;
for (let f = -50; f <= 280; f += 10) {
    const x = frameX(f);
    out += `<path d="M${x} 452v19" stroke="#000" stroke-opacity=".15"/>
        <text class="ruler-text" x="${x}" y="478" text-anchor="middle">${f}</text>`;
}
out += `
    <path d="M${frameX(34.5)} 459v12M${frameX(44.6)} 459v12" stroke="#a8a62c"/>
    <path d="M${frameX(74)} 452v19" stroke="#52c83c" stroke-width="2"/>`;
document.getElementById('frames').innerHTML = out;
```
